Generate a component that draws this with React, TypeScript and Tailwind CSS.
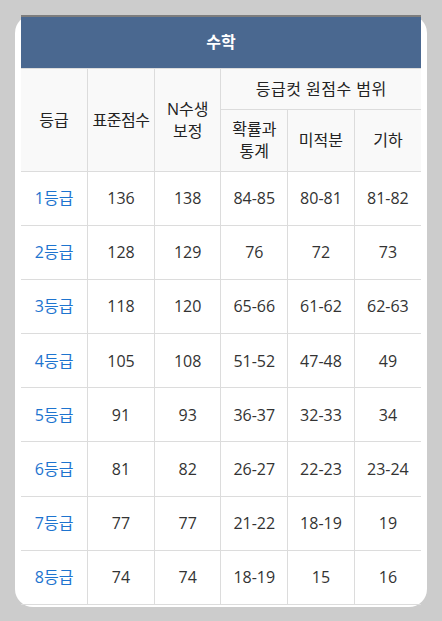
import React from 'react'

const rows = [
  ['1등급', '136', '138', '84-85', '80-81', '81-82'],
  ['2등급', '128', '129', '76', '72', '73'],
  ['3등급', '118', '120', '65-66', '61-62', '62-63'],
  ['4등급', '105', '108', '51-52', '47-48', '49'],
  ['5등급', '91', '93', '36-37', '32-33', '34'],
  ['6등급', '81', '82', '26-27', '22-23', '23-24'],
  ['7등급', '77', '77', '21-22', '18-19', '19'],
  ['8등급', '74', '74', '18-19', '15', '16'],
]

const th = 'border border-[#dcdcdc] bg-[#f9f9f9] font-normal text-[#222] align-middle px-0'

const App = () => {
  return (
    <div
      className="min-h-screen bg-[#cccccc] p-[15px]"
      style={{ fontFamily: '"Open Sans", "Noto Sans CJK KR", sans-serif' }}
    >
      <div className="bg-white rounded-[18px] px-[6px] pb-[2px]">
        <table className="w-full table-fixed border-collapse text-[16px] leading-[22px] text-center">
          <thead>
            <tr>
              <th
                colSpan={6}
                className="h-[52px] bg-[#4a6890] border-t-2 border-[#7d7d7d] text-white font-bold text-[16px]"
              >
                수학
              </th>
            </tr>
            <tr className="h-[41px]">
              <th rowSpan={2} className={`${th} border-l-0`}>등급</th>
              <th rowSpan={2} className={`${th} tracking-[-0.5px]`}>표준점수</th>
              <th rowSpan={2} className={th}>N수생<br />보정</th>
              <th colSpan={3} className={`${th} border-r-0 tracking-[0.5px]`}>등급컷 원점수 범위</th>
            </tr>
            <tr className="h-[62px]">
              <th className={th}>확률과<br />통계</th>
              <th className={th}>미적분</th>
              <th className={`${th} border-r-0`}>기하</th>
            </tr>
          </thead>
          <tbody>
            {rows.map((r) => (
              <tr key={r[0]} className="h-[54.2px]">
                {r.map((c, i) => (
                  <td
                    key={i}
                    className={`border border-[#dcdcdc] align-middle ${i === 0 ? 'border-l-0 text-[#1e74cf]' : 'text-[#333]'} ${i === 5 ? 'border-r-0' : ''}`}
                  >
                    {c}
                  </td>
                ))}
              </tr>
            ))}
          </tbody>
        </table>
      </div>
    </div>
  )
}

export default App
